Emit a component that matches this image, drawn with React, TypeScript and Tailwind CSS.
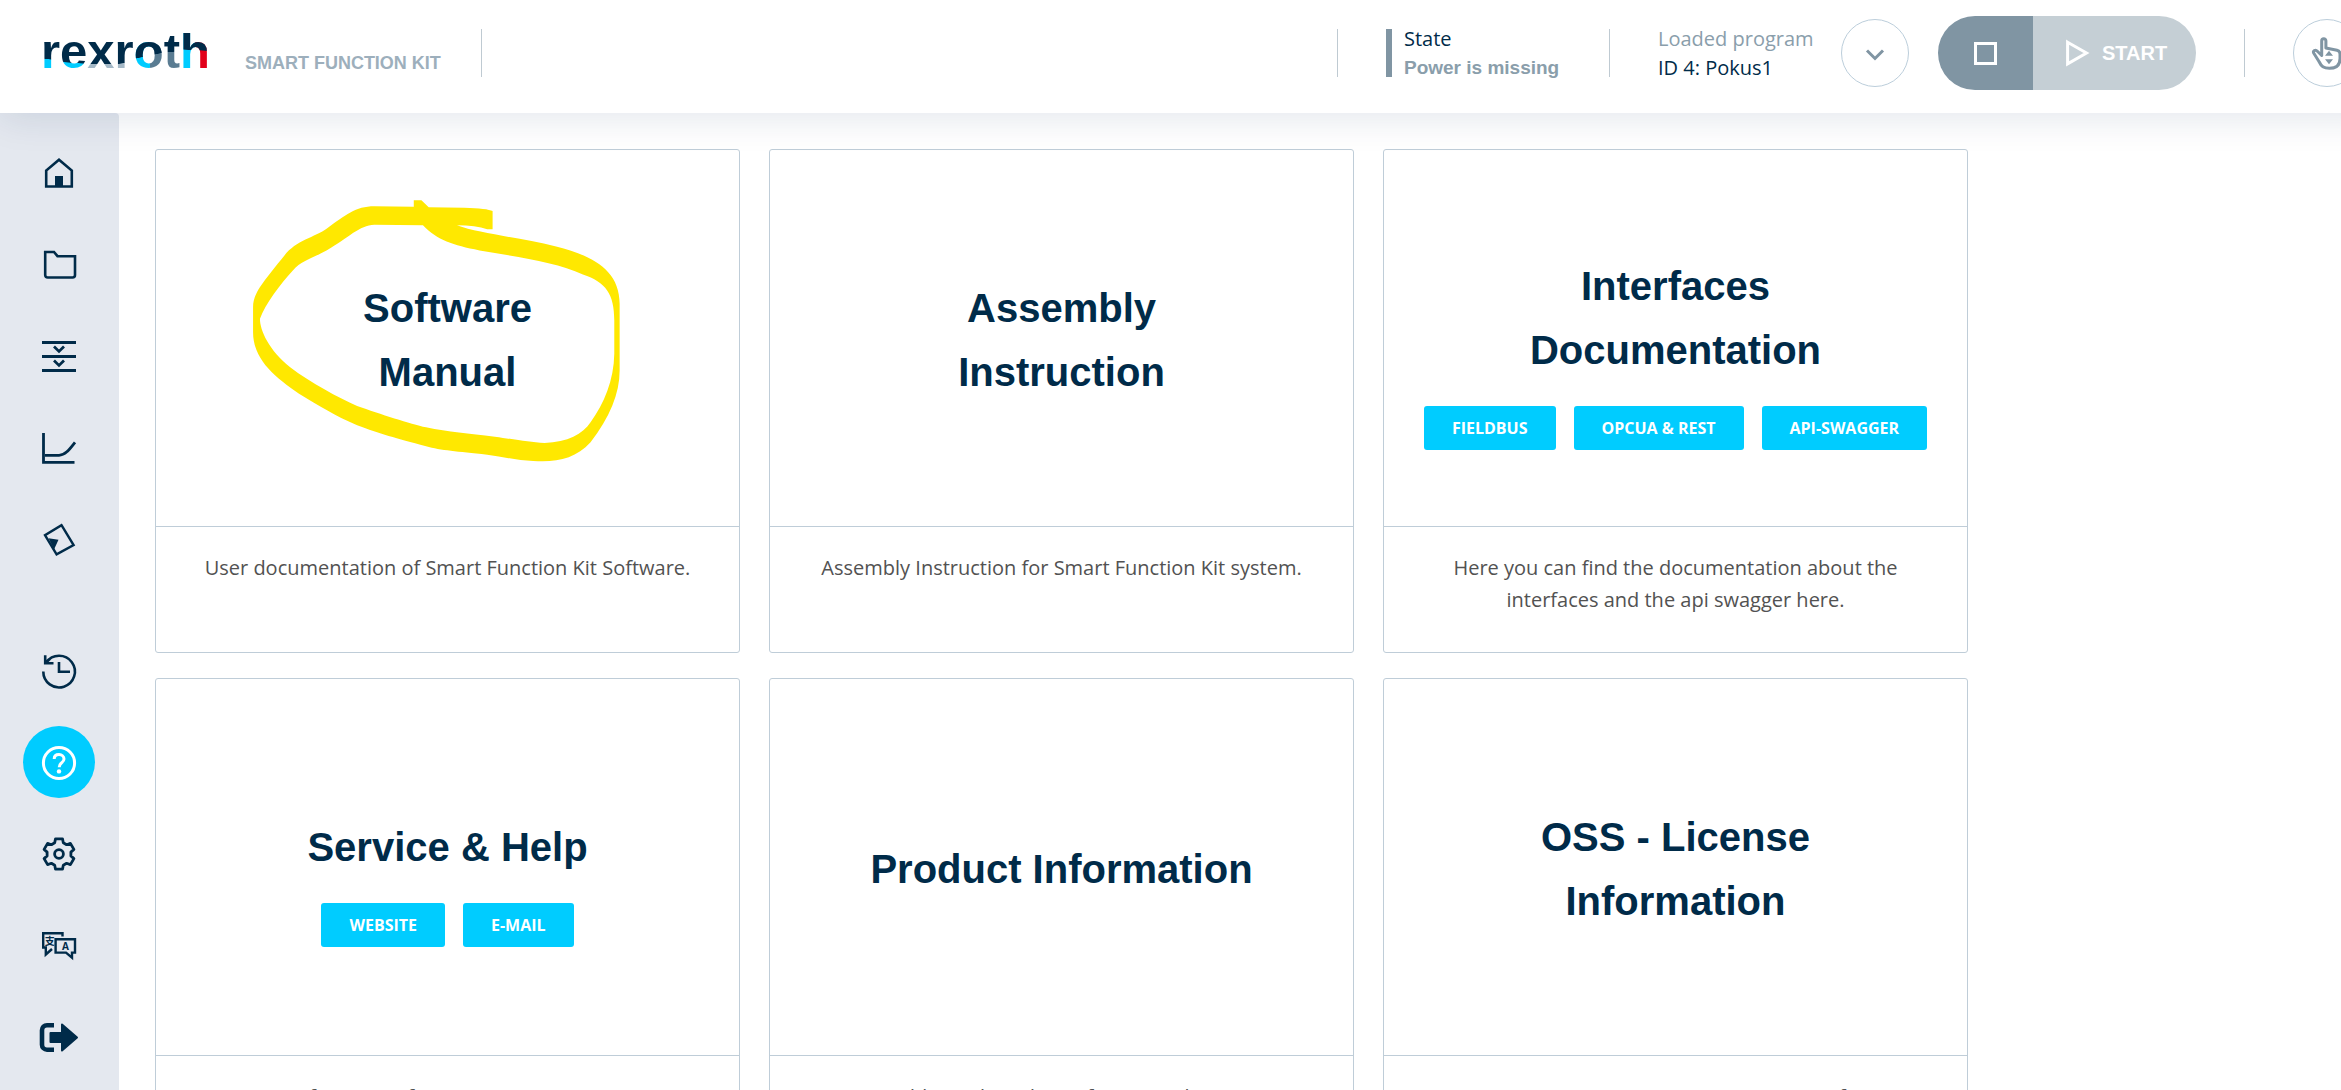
import React, { type ReactNode } from "react";

const GEAR_POINTS = Array.from({ length: 6 }, (_, i) => i * 60 - 90)
  .flatMap((centre) => [
    [centre - 21, 12],
    [centre - 13, 15.6],
    [centre + 13, 15.6],
    [centre + 21, 12],
  ])
  .map(([deg, r]) => {
    const rad = (deg * Math.PI) / 180;
    return `${(18 + r * Math.cos(rad)).toFixed(1)},${(18 + r * Math.sin(rad)).toFixed(1)}`;
  })
  .join(" ");

function Icon({ children, width = 2.6 }: { children: ReactNode; width?: number }) {
  return (
    <svg
      viewBox="0 0 36 36"
      className="size-9 overflow-visible"
      fill="none"
      stroke="currentColor"
      strokeWidth={width}
      aria-hidden="true"
    >
      {children}
    </svg>
  );
}

const HomeIcon = () => (
  <Icon width={2.6}>
    <path d="M5.2 31.5V15.5L18 4.8L30.8 15.5V31.5Z" />
    <path d="M14 21H22V32H14Z" fill="currentColor" stroke="none" />
  </Icon>
);
const FolderIcon = () => (
  <Icon width={2.6}>
    <path d="M4.2 6H13L16.5 10.2H34V29Q34 31.5 31.5 31.5H6.7Q4.2 31.5 4.2 29Z" />
  </Icon>
);
const ProcessIcon = () => (
  <Icon width={2.8}>
    <path d="M1 4.5H35M1 18.5H35M1 32.5H35" />
    <path d="M13 8.6L18 13.4L23 8.6M13 22.6L18 27.4L23 22.6" />
  </Icon>
);
const ChartIcon = () => (
  <Icon width={2.8}>
    <path d="M2.5 3V32.3H33.5" />
    <path d="M4 25.3H18C24 25.3 28 20 34 12.3" />
  </Icon>
);
const TagIcon = () => (
  <Icon width={2.4}>
    <path d="M20.5 4.2L32.6 24L15.6 33.4L4 14.2Z" />
    <path d="M7.5 17.3L17.5 18.8L13 28.5Z" fill="currentColor" stroke="none" />
  </Icon>
);
const HistoryIcon = () => (
  <Icon width={2.6}>
    <path d="M2.3 18.5A15.8 15.8 0 1 0 5.2 9.5M4.2 2.3V10.3H12.5M4.4 10.2L9 5.8" />
    <path d="M18 9V18.8H29" />
  </Icon>
);
const HelpIcon = () => (
  <Icon width={3}>
    <circle cx="18" cy="19" r="15.6" />
    <path d="M13.2 15C13.2 12 15.2 10.6 18 10.6S23 12.3 23 15C23 18.8 18.2 18.4 18.2 23.2" />
    <circle cx="18" cy="27.4" r="2.2" fill="currentColor" stroke="none" />
  </Icon>
);
const GearIcon = () => (
  <Icon width={2.8}>
    <polygon points={GEAR_POINTS} strokeLinejoin="round" />
    <circle cx="18" cy="18" r="4.4" />
  </Icon>
);
const LanguageIcon = () => (
  <Icon width={2.4}>
    <path d="M21.5 8.6V5.2H2.2V19.5H4.8V26.5L11 21" />
    <path d="M14.6 11.3H34V24.6H31V29.6L25 24.6H14.6Z" />
    <text x="24.4" y="21.6" textAnchor="middle" className="font-['Open_Sans',sans-serif] text-[10px] font-bold" fill="currentColor" stroke="none">A</text>
    <text x="8.8" y="17" textAnchor="middle" className="font-['Noto_Sans_CJK_SC',sans-serif] text-[10px] font-bold" fill="currentColor" stroke="none">支</text>
  </Icon>
);
const LogoutIcon = () => (
  <Icon width={4.6}>
    <path d="M13 6.2H6a5 5 0 0 0-5 5V25.7a5 5 0 0 0 5 5H13" />
    <path d="M9.5 14H21V5.5L36 18.5L21 31.5V23H9.5Z" fill="currentColor" strokeWidth="2" strokeLinejoin="round" />
  </Icon>
);
const JogIcon = () => (
  <Icon width={3}>
    <path
      d="M12.7 20.5V5.8a2.1 2.1 0 0 1 4.2 0V13L28 15.3Q31 16 31 19V23.5C31 30 27 33.3 20.5 33.3C14.5 33.3 12.4 31.5 10 26.5L4.8 18.3C3.5 15.8 6.4 14 8.4 16.3Z"
      strokeLinejoin="round"
    />
    <path d="M20 15.8L24 20.8H16ZM16 24.2H24L20 29.2Z" fill="currentColor" stroke="none" />
  </Icon>
);

const PRIMARY_NAV = [
  { label: "Home", icon: <HomeIcon /> },
  { label: "Programs", icon: <FolderIcon /> },
  { label: "Process", icon: <ProcessIcon /> },
  { label: "Curves", icon: <ChartIcon /> },
  { label: "Parts", icon: <TagIcon /> },
];
const SECONDARY_NAV = [
  { label: "History", icon: <HistoryIcon /> },
  { label: "Help", icon: <HelpIcon />, active: true },
  { label: "Settings", icon: <GearIcon /> },
  { label: "Language", icon: <LanguageIcon /> },
  { label: "Log out", icon: <LogoutIcon /> },
];

function NavGroup({ items }: { items: { label: string; icon: ReactNode; active?: boolean }[] }) {
  return (
    <ul className="flex h-[458px] flex-col">
      {items.map(({ label, icon, active }) => (
        <li key={label} className="flex flex-1 items-center justify-center">
          <button
            type="button"
            aria-label={label}
            aria-current={active ? "page" : undefined}
            className={
              active
                ? "flex size-18 items-center justify-center rounded-full bg-[#00ccff] text-white"
                : "flex size-18 items-center justify-center rounded-full"
            }
          >
            {icon}
          </button>
        </li>
      ))}
    </ul>
  );
}

const LOGO_LETTERS = [
  { char: "r", fill: "bg-[linear-gradient(187deg,#002b49_64%,#00ccff_65%)]" },
  { char: "e", fill: "bg-[linear-gradient(184deg,#002b49_70%,#00ccff_71%)]" },
  { char: "x", fill: "bg-[linear-gradient(180deg,#002b49_73%,#a5b9c7_74%)]" },
  { char: "r", fill: "bg-[linear-gradient(172deg,#002b49_70%,#a5b9c7_71%)]" },
  { char: "o", fill: "bg-[linear-gradient(168deg,#002b49_57%,transparent_58%),linear-gradient(90deg,#00ccff_54%,#5a7c92_55%)]" },
  { char: "t", fill: "bg-[linear-gradient(176deg,#002b49_51%,#5a7c92_52%)]" },
  { char: "h", fill: "bg-[linear-gradient(183deg,#002b49_48%,transparent_49%),linear-gradient(90deg,#00ccff_50%,#e2001a_51%)]" },
];

const Logo = () => (
  <a href="#home" aria-label="rexroth" className="-mt-1 flex font-['Liberation_Sans',Arial,sans-serif] text-[49px] leading-[56px] font-bold">
    {LOGO_LETTERS.map(({ char, fill }, i) => (
      <span key={i} className={`${fill} bg-clip-text text-transparent`}>
        {char}
      </span>
    ))}
  </a>
);

const Divider = () => <div className="h-12 w-px bg-[#bfcad2]" />;

function Header() {
  return (
    <header className="relative z-10 -mr-10 flex h-[113px] shrink-0 bg-white pr-5 pb-[7px] pl-[41px] shadow-[0_4px_36px_rgba(0,43,93,0.12)]">
      <div className="flex flex-1 items-center">
        <Logo />
        <span className="mt-5 ml-[35px] font-['Liberation_Sans',Arial,sans-serif] text-lg leading-7 font-bold whitespace-nowrap text-[#9dafbc]">
          SMART FUNCTION KIT
        </span>
        <div className="ml-10">
          <Divider />
        </div>
      </div>
      <div className="flex shrink-0 items-center text-xl leading-[29px] whitespace-nowrap">
        <Divider />
        <div className="ml-12 h-12 w-1.5 bg-[#8095a3]" />
        <div className="ml-3 w-[205px]">
          <p>State</p>
          <p className="font-['Liberation_Sans',Arial,sans-serif] text-[19px] font-bold text-[#8a9eab]">Power is missing</p>
        </div>
        <Divider />
        <div className="ml-12 w-[183px]">
          <p className="text-[#8a9eab]">Loaded program</p>
          <p>ID 4: Pokus1</p>
        </div>
        <button type="button" aria-label="Select program" className="flex size-[68px] items-center justify-center rounded-full border border-[#bccedb] text-[#8095a3]">
          <svg viewBox="0 0 20 12" className="mt-1 h-3 w-5" fill="none" stroke="currentColor" strokeWidth="3" aria-hidden="true">
            <path d="M2 1.5L10 9.5L18 1.5" />
          </svg>
        </button>
        <div className="ml-[29px] flex h-[74px] w-[258px] overflow-hidden rounded-full text-white">
          <button type="button" aria-label="Stop" className="flex w-[95px] items-center justify-center bg-[#8095a3]">
            <span className="size-[23px] border-[3px] border-white" />
          </button>
          <button type="button" className="flex flex-1 items-center gap-3 bg-[#c5cfd5] pl-8 font-['Liberation_Sans',Arial,sans-serif] text-xl font-bold">
            <svg viewBox="0 0 25 28" className="h-7 w-[25px]" fill="none" stroke="currentColor" strokeWidth="3" aria-hidden="true">
              <path d="M2.6 3.2L21.5 14L2.6 24.8Z" />
            </svg>
            START
          </button>
        </div>
        <div className="ml-12">
          <Divider />
        </div>
        <button type="button" aria-label="Jog mode" className="ml-12 flex size-[68px] items-center justify-center rounded-full border border-[#bccedb] text-[#8095a3]">
          <JogIcon />
        </button>
      </div>
    </header>
  );
}

const CARDS: { title: string[]; links?: string[]; text: string; circled?: boolean }[] = [
  { title: ["Software", "Manual"], text: "User documentation of Smart Function Kit Software.", circled: true },
  { title: ["Assembly", "Instruction"], text: "Assembly Instruction for Smart Function Kit system." },
  {
    title: ["Interfaces", "Documentation"],
    links: ["FIELDBUS", "OPCUA & REST", "API-SWAGGER"],
    text: "Here you can find the documentation about the interfaces and the api swagger here.",
  },
  { title: ["Service & Help"], links: ["WEBSITE", "E-MAIL"], text: "Information for your service case." },
  { title: ["Product Information"], text: "Additional product information here." },
  { title: ["OSS - License", "Information"], text: "License terms concerning Open Source Software." },
];

const MarkerCircle = () => (
  <svg
    viewBox="260 170 980 800"
    preserveAspectRatio="none"
    className="pointer-events-none absolute top-[47px] left-[94px] h-[267px] w-[375px]"
    fill="#ffe800"
    fillRule="evenodd"
    aria-hidden="true"
  >
    <path d="M688 180H708L727 201L820 202Q880 204 894 212V267H880Q850 255 801 255C860 280 960 290 1060 318C1150 345 1226 385 1226 490V690C1226 760 1200 830 1150 905C1110 955 1060 966 1000 961C960 960 920 948 880 942C800 932 760 930 720 917C640 892 600 880 540 854C480 825 440 795 400 768C330 715 268 660 268 575V500C268 460 290 430 350 345C380 300 430 290 460 265C510 225 535 198 585 198L688 199ZM712 255L585 253C545 255 520 290 460 330C420 355 395 360 372 390C340 430 300 490 286 535C286 570 310 630 365 680C420 728 490 770 540 796C600 820 680 850 720 860C780 875 830 878 900 888C960 898 990 905 1030 907C1090 905 1130 880 1150 845C1185 790 1211 720 1212 640V540C1212 460 1190 425 1130 402C1060 365 960 350 860 330C790 315 750 300 712 255Z" />
  </svg>
);

export default function App() {
  return (
    <div className="flex h-screen flex-col overflow-hidden bg-white font-['Open_Sans','Noto_Sans',sans-serif] text-[#002b49]">
      <Header />
      <div className="flex min-h-0 flex-1">
        <nav aria-label="Main" className="flex w-[119px] shrink-0 flex-col gap-10 overflow-hidden rounded-tr bg-[#e4e8ef] pt-3.5 pr-px">
          <NavGroup items={PRIMARY_NAV} />
          <NavGroup items={SECONDARY_NAV} />
        </nav>
        <main className="grid flex-1 grid-cols-[repeat(auto-fill,585px)] content-start gap-x-[29px] gap-y-[25px] overflow-hidden pt-9 pl-9">
          {CARDS.map(({ title, links, text, circled }) => (
            <article key={title[0]} className="relative rounded-[3px] border border-[#bfcdd8] text-center">
              <div className="flex h-[376px] flex-col items-center justify-center pt-1">
                <h2 className="font-['Liberation_Sans',Arial,sans-serif] text-[40px] leading-[64px] font-bold">
                  {title.map((line) => (
                    <span key={line} className="block">
                      {line}
                    </span>
                  ))}
                </h2>
                {links && (
                  <div className="mt-6 -mb-6 flex gap-[18px]">
                    {links.map((link) => (
                      <a key={link} href="#docs" className="rounded-[3px] bg-[#00ccff] px-7 text-base leading-[44px] font-bold text-white">
                        {link}
                      </a>
                    ))}
                  </div>
                )}
              </div>
              <p className="min-h-[126px] border-t border-[#bfcdd8] px-10 pt-[25px] text-xl leading-8 text-[#525252]">{text}</p>
              {circled && <MarkerCircle />}
            </article>
          ))}
        </main>
      </div>
    </div>
  );
}
